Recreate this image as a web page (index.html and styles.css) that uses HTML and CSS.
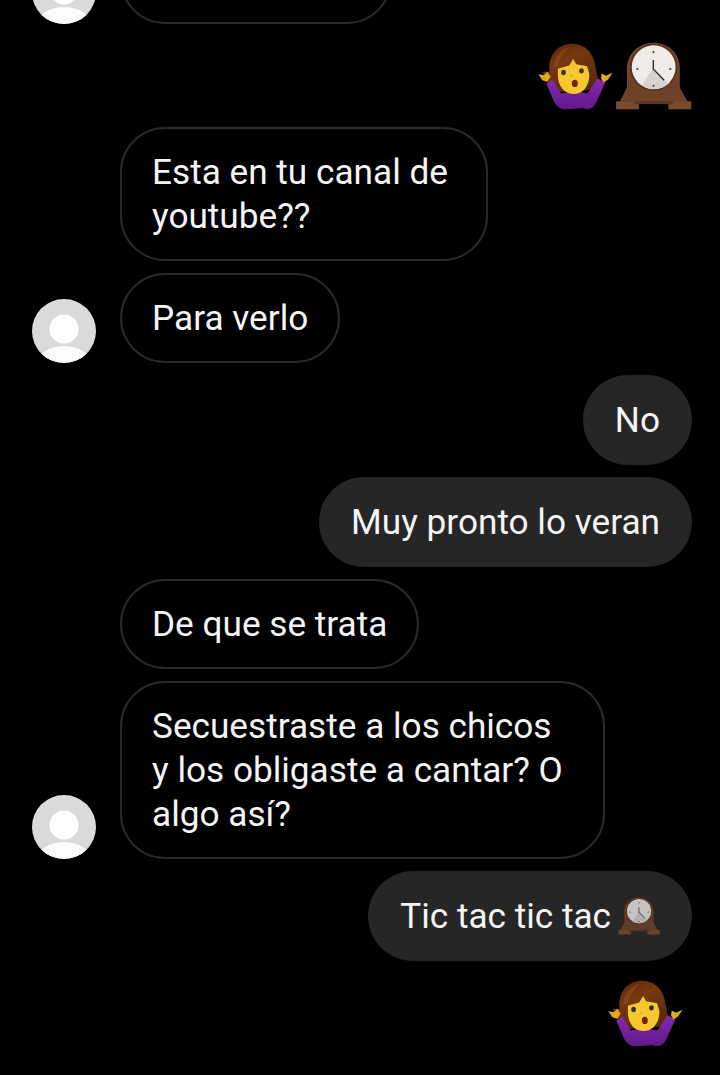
FILE: index.html
```html
<!DOCTYPE html>
<html lang="es">
<head>
    <meta charset="UTF-8">
    <meta name="viewport" content="width=device-width, initial-scale=1.0">
    <title>Chat</title>
    <link rel="stylesheet" href="styles.css">
</head>
<body>
    <!-- shared emoji and avatar drawings -->
    <svg class="defs" aria-hidden="true">
        <defs>
            <linearGradient id="hair" x1="0.2" y1="0" x2="0.7" y2="1">
                <stop offset="0" stop-color="#5a240a"/>
                <stop offset="0.35" stop-color="#773810"/>
                <stop offset="1" stop-color="#52280e"/>
            </linearGradient>
            <linearGradient id="dress" x1="0" y1="0" x2="0" y2="1">
                <stop offset="0" stop-color="#8a27b0"/>
                <stop offset="1" stop-color="#5e1a8c"/>
            </linearGradient>
            <linearGradient id="wood" x1="0" y1="0" x2="0" y2="1">
                <stop offset="0" stop-color="#7a4a2e"/>
                <stop offset="1" stop-color="#6a3f28"/>
            </linearGradient>
            <clipPath id="avatar-clip">
                <circle cx="32" cy="32" r="32"/>
            </clipPath>
            <symbol id="shrug" viewBox="55 35 230 205">
                <path fill="url(#hair)" d="M92 125C86 72 118 40 160 40c44 0 66 36 70 68 4 24 10 40 8 52l-26 20-94 6c-18-16-43-36-46-61z"/>
                <path fill="#8c4f22" d="M104 110c0-30 24-56 50-60-18 14-34 36-38 60z" opacity="0.6"/>
                <path fill="url(#dress)" d="M82 160l18-12 26 42 40-8 40 8 30-46 24 12-28 62c-8 18-26 24-40 16l-26 2-26 2c-20 0-30-14-36-26z"/>
                <path fill="#f5c92e" d="M117 116l34-10 12-20 9 16 33 6 7 24c0 38-22 60-47 60-30 0-48-24-48-58z"/>
                <ellipse cx="134" cy="127" rx="7" ry="8" fill="#3a2c1a"/>
                <ellipse cx="188" cy="122" rx="7" ry="8" fill="#3a2c1a"/>
                <circle cx="158" cy="137" r="3" fill="#d89a20"/>
                <ellipse cx="168" cy="160" rx="9" ry="11" fill="#7a1f0f"/>
                <path fill="#e5a81f" d="M58 132l17 3 10-10 10 15-10 15-15-5z"/>
                <path fill="#e5a81f" d="M249 130l13 7 20-9-14 20-13 9-8-12z"/>
            </symbol>
            <symbol id="clock" viewBox="285 33 233 208">
                <path fill="url(#wood)" d="M320 195V115c0-50 40-80 82-80s80 30 80 80v80z"/>
                <path fill="#6f432a" d="M320 172h162l24 44H298z"/>
                <rect x="287" y="214" width="70" height="25" rx="2" fill="#7a4a30"/>
                <rect x="447" y="214" width="70" height="25" rx="2" fill="#7a4a30"/>
                <rect x="345" y="214" width="115" height="9" fill="#5c3520"/>
                <circle cx="402" cy="110" r="73" fill="#5a3420"/>
                <circle cx="402" cy="110" r="67" fill="#efecE8"/>
                <path fill="#d6d2ce" d="M402 110l46 50a67 67 0 0 1-82 6z"/>
                <g fill="#3c3532">
                    <rect x="399" y="61" width="5" height="6"/>
                    <rect x="399" y="164" width="5" height="6"/>
                    <rect x="349" y="113" width="6" height="5"/>
                    <rect x="450" y="113" width="6" height="5"/>
                </g>
                <path stroke="#2b2522" stroke-width="4" fill="none" d="M401 118V88M401 116l33 34"/>
            </symbol>
            <symbol id="avatar" viewBox="0 0 64 64">
                <circle cx="32" cy="32" r="32" fill="#dadada"/>
                <circle cx="32" cy="30" r="14.500" fill="#fff"/>
                <ellipse cx="32" cy="67" rx="28" ry="20" fill="#fbfbfb" clip-path="url(#avatar-clip)"/>
            </symbol>
        </defs>
    </svg>

    <div class="chat">
        <div class="row">
            <div class="avatar-slot"><svg class="avatar"><use href="#avatar"/></svg></div>
            <div class="bubble in cut-off"></div>
        </div>

        <div class="row right emoji-row">
            <svg class="emoji-big"><use href="#shrug"/></svg>
            <svg class="emoji-big"><use href="#clock"/></svg>
        </div>

        <div class="row">
            <div class="avatar-slot"></div>
            <div class="bubble in medium">Esta en tu canal de youtube??</div>
        </div>
        <div class="row">
            <div class="avatar-slot"><svg class="avatar"><use href="#avatar"/></svg></div>
            <div class="bubble in">Para verlo</div>
        </div>

        <div class="row right"><div class="bubble out">No</div></div>
        <div class="row right"><div class="bubble out">Muy pronto lo veran</div></div>

        <div class="row">
            <div class="avatar-slot"></div>
            <div class="bubble in">De que se trata</div>
        </div>
        <div class="row">
            <div class="avatar-slot"><svg class="avatar"><use href="#avatar"/></svg></div>
            <div class="bubble in wide">Secuestraste a los chicos y los obligaste a cantar? O algo así?</div>
        </div>

        <div class="row right">
            <div class="bubble out">Tic tac tic tac <svg class="emoji-small"><use href="#clock"/></svg></div>
        </div>

        <div class="row right emoji-row">
            <svg class="emoji-big last"><use href="#shrug"/></svg>
        </div>
    </div>
</body>
</html>
```

FILE: styles.css
```css
html, body {
    height: 100%;
}
body {
    margin: 0;
    background-color: #000;
    color: #f4f4f4;
    font-family: Roboto, "Liberation Sans", sans-serif;
    overflow: hidden;
}
.defs {
    width: 0;
    height: 0;
    position: absolute;
}
.chat {
    display: flex;
    flex-direction: column;
    gap: 12px;
    margin-top: -66px;
    padding: 0 28px 0 32px;
}
.row {
    display: flex;
    align-items: flex-end;
    gap: 24px;
}
.row.right {
    justify-content: flex-end;
    gap: 1px;
}
.emoji-row {
    padding: 6px 0 5px;
}
.avatar-slot {
    width: 64px;
    flex-shrink: 0;
}
.avatar {
    display: block;
    width: 64px;
    height: 64px;
}
.bubble {
    box-sizing: border-box;
    font-size: 35.2px;
    line-height: 44px;
    padding: 23px 32px;
    border-radius: 45px;
}
.bubble.in {
    border: 2px solid #2a2a2a;
    padding: 21px 30px;
}
.bubble.out {
    background-color: #262626;
    display: flex;
    align-items: center;
    gap: 7px;
}
.bubble.cut-off {
    width: 272px;
    height: 90px;
}
.bubble.medium {
    width: 368px;
}
.bubble.wide {
    width: 485px;
}
.emoji-big {
    display: block;
    width: 77px;
    height: 68px;
}
.emoji-big.last {
    margin-right: 8px;
}
.emoji-small {
    display: block;
    width: 42px;
    height: 38px;
    opacity: 0.8;
}
```
